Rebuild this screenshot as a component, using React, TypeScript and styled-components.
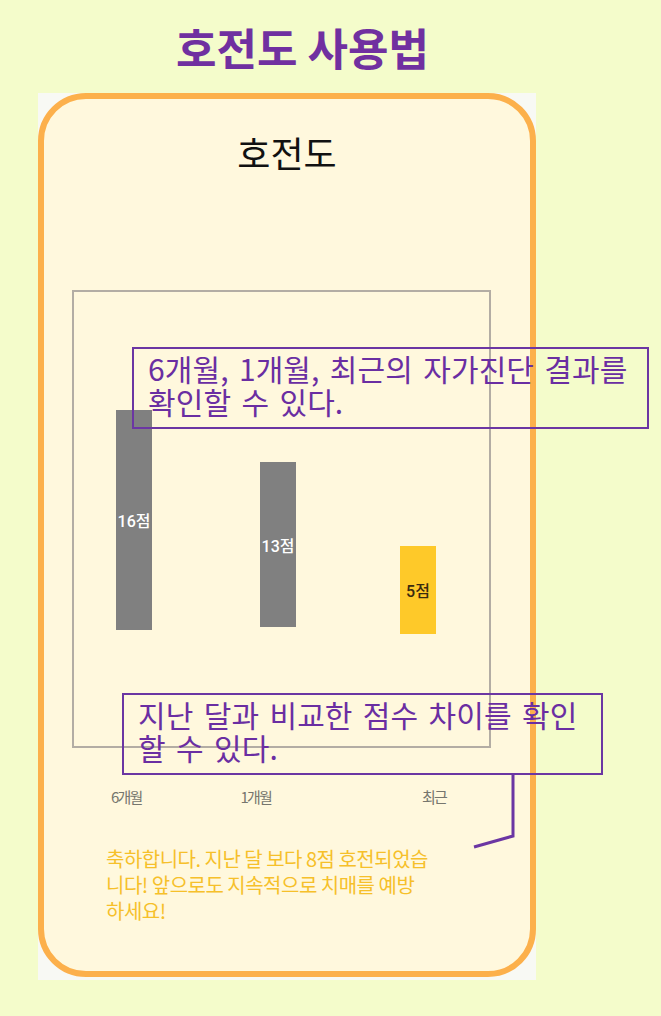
import React from "react";
import styled, { createGlobalStyle } from "styled-components";

const GlobalStyle = createGlobalStyle`
    html, body {
        margin: 0;
        padding: 0;
        background: #f4fccb;
        font-family: "Noto Sans CJK KR", "Noto Sans", sans-serif;
    }
`;

const Page = styled.div`
    position: relative;
    width: 661px;
    height: 1016px;
    overflow: hidden;
`;

const Heading = styled.h1`
    margin: 0;
    padding-top: 20px;
    width: 605px;
    height: 71px;
    box-sizing: border-box;
    text-align: center;
    font-size: 44px;
    line-height: 54px;
    font-weight: 700;
    color: #7030a0;
`;

const Shot = styled.div`
    margin: 22px 0 0 38px;
    width: 498px;
    height: 887px;
    background: #f8f9f4;
`;

const Phone = styled.div`
    height: 884px;
    box-sizing: border-box;
    border: 6px solid #fcb04b;
    border-radius: 48px;
    background: #fff8dd;
    display: flex;
    flex-direction: column;
    align-items: stretch;
`;

const ScreenTitle = styled.div`
    margin-top: 29px;
    text-align: center;
    font-size: 36px;
    line-height: 48px;
    color: #111;
`;

const ChartBox = styled.div`
    margin: 114px 0 0 28px;
    width: 419px;
    height: 458px;
    box-sizing: border-box;
    border: 2px solid #b3ada4;
    display: flex;
    align-items: flex-start;
    padding-left: 42px;
`;

const Bar = styled.div<{ $top: number; $height: number; $gap: number; $active?: boolean }>`
    margin-top: ${p => p.$top}px;
    margin-left: ${p => p.$gap}px;
    width: 36px;
    height: ${p => p.$height}px;
    background: ${p => (p.$active ? "#fec929" : "#808080")};
    color: ${p => (p.$active ? "#3a2a10" : "#fff")};
    display: flex;
    align-items: center;
    justify-content: center;
    font-family: Roboto, "Noto Sans CJK KR", sans-serif;
    font-size: 16px;
    font-weight: 500;
    white-space: nowrap;
`;

const AxisRow = styled.div`
    margin-top: 39px;
    display: flex;
    font-size: 15px;
    line-height: 20px;
    letter-spacing: -1.8px;
    color: #76766e;
`;

const AxisLabel = styled.span<{ $left: number }>`
    margin-left: ${p => p.$left}px;
`;

const Message = styled.p`
    margin: 39px 0 0 62px;
    font-size: 20px;
    line-height: 26px;
    letter-spacing: -0.5px;
    color: #f6c02a;
    white-space: nowrap;
`;

const Callout = styled.div<{ $left: number; $top: number; $width: number }>`
    position: absolute;
    left: ${p => p.$left}px;
    top: ${p => p.$top}px;
    width: ${p => p.$width}px;
    height: 82px;
    box-sizing: border-box;
    border: 2px solid #6b36a3;
    padding: 3px 0 0 14px;
    font-size: 30px;
    line-height: 33px;
    color: #6a2ea2;
    letter-spacing: 0.1px;
    word-spacing: 3.5px;
    white-space: nowrap;
`;

const Connector = styled.svg`
    position: absolute;
    left: 0;
    top: 0;
`;

const bars = [
    { label: "16점", top: 118, height: 220, gap: 0 },
    { label: "13점", top: 170, height: 165, gap: 108 },
    { label: "5점", top: 254, height: 88, gap: 104, active: true },
];

export default function App() {
    return (
        <Page>
            <GlobalStyle />
            <Heading>호전도 사용법</Heading>
            <Shot>
                <Phone>
                    <ScreenTitle>호전도</ScreenTitle>
                    <ChartBox>
                        {bars.map(b => (
                            <Bar key={b.label} $top={b.top} $height={b.height} $gap={b.gap} $active={b.active}>
                                {b.label}
                            </Bar>
                        ))}
                    </ChartBox>
                    <AxisRow>
                        <AxisLabel $left={67}>6개월</AxisLabel>
                        <AxisLabel $left={99}>1개월</AxisLabel>
                        <AxisLabel $left={151}>최근</AxisLabel>
                    </AxisRow>
                    <Message>
                        축하합니다. 지난 달 보다 8점 호전되었습
                        <br />
                        니다! 앞으로도 지속적으로 치매를 예방
                        <br />
                        하세요!
                    </Message>
                </Phone>
            </Shot>

            <Callout $left={132} $top={347} $width={517}>
                6개월, 1개월, 최근의 자가진단 결과를
                <br />
                확인할 수 있다.
            </Callout>
            <Callout $left={122} $top={693} $width={481}>
                지난 달과 비교한 점수 차이를 확인
                <br />
                할 수 있다.
            </Callout>
            <Connector width="661" height="1016">
                <polyline points="513,775 513,836 474,847" fill="none" stroke="#6b36a3" strokeWidth="3" />
            </Connector>
        </Page>
    );
}
